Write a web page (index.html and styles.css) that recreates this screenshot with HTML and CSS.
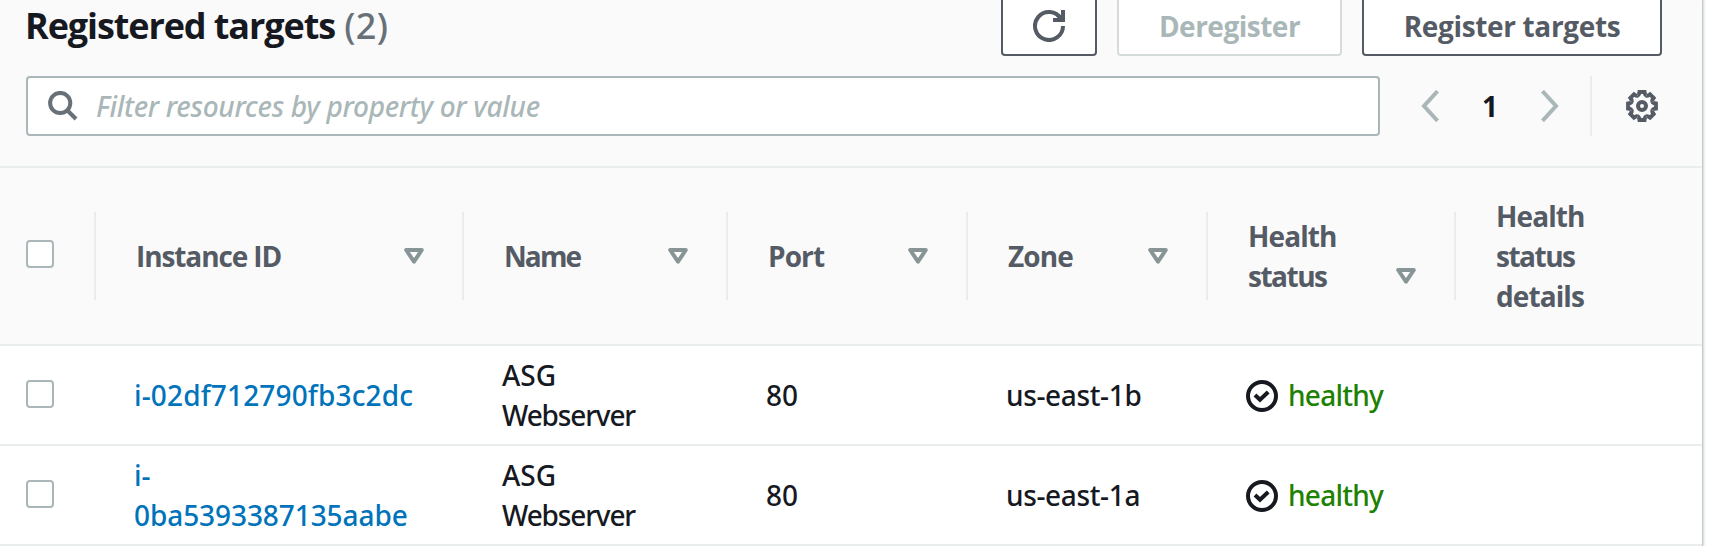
FILE: index.html
```html
<!DOCTYPE html>
<html lang="en">
<head>
<meta charset="utf-8">
<title>Registered targets</title>
<link rel="stylesheet" href="styles.css">
</head>
<body>
<svg class="defs" aria-hidden="true">
  <symbol id="sort" viewBox="0 0 20 16"><path d="M2.2 2h15.6L10 13.6z" fill="#fff" stroke="#879596" stroke-width="4" stroke-linejoin="round"/></symbol>
  <symbol id="check" viewBox="0 0 32 32"><g fill="none" stroke="#16191f" stroke-width="4"><circle cx="16" cy="16" r="14"/><path d="M9 15l5 4.8L22.2 12"/></g></symbol>
  <path id="tooth" d="M-4.32-10.44Q-2.9-11-2.5-13.9H2.5Q2.9-11 4.32-10.44"/>
</svg>
<main class="panel">
  <header class="head">
    <div class="title-row">
      <h1 class="title">Registered targets <span class="count">(2)</span></h1>
      <div class="actions">
        <button class="btn btn-icon" aria-label="Refresh">
          <svg width="32" height="32" viewBox="0 0 32 32" fill="none" stroke="#545b64" stroke-width="4"><path d="M30 16A14 14 0 1 1 28 8.8M20 10h10V0"/><path d="M24 5l5 5" stroke-width="3"/></svg>
        </button>
        <button class="btn btn-disabled" disabled>Deregister</button>
        <button class="btn btn-register">Register targets</button>
      </div>
    </div>
    <div class="tools">
      <div class="filter">
        <svg width="30" height="30" viewBox="0 0 30 30" fill="none" stroke="#687078" stroke-width="4"><circle cx="12.2" cy="12" r="10.1"/><path d="M19 19l9 9"/></svg>
        <span class="placeholder">Filter resources by property or value</span>
      </div>
      <nav class="pages">
        <svg width="18" height="32" viewBox="0 0 18 32" fill="none" stroke="#aab7b8" stroke-width="4"><path d="M16.5 1.2L3 16l13.5 14.8"/></svg>
        <span class="page">1</span>
        <svg width="18" height="32" viewBox="0 0 18 32" fill="none" stroke="#aab7b8" stroke-width="4"><path d="M1.5 1.2L15 16 1.5 30.8"/></svg>
      </nav>
      <div class="settings">
        <svg width="32" height="32" viewBox="-16 -16 32 32" fill="none" stroke="#545b64" stroke-width="4">
          <circle r="4"/>
          <use href="#tooth"/><use href="#tooth" transform="rotate(45)"/><use href="#tooth" transform="rotate(90)"/><use href="#tooth" transform="rotate(135)"/><use href="#tooth" transform="rotate(180)"/><use href="#tooth" transform="rotate(225)"/><use href="#tooth" transform="rotate(270)"/><use href="#tooth" transform="rotate(315)"/>
        </svg>
      </div>
    </div>
  </header>
  <section class="table">
    <div class="row row-head">
      <div class="cell-check"><span class="box"></span></div>
      <div class="th"><span class="label-id">Instance ID</span><svg class="sort"><use href="#sort"/></svg></div>
      <div class="th"><span class="label-name">Name</span><svg class="sort"><use href="#sort"/></svg></div>
      <div class="th"><span>Port</span><svg class="sort"><use href="#sort"/></svg></div>
      <div class="th"><span>Zone</span><svg class="sort"><use href="#sort"/></svg></div>
      <div class="th"><span>Health<br><span class="label-status">status</span></span><svg class="sort sort-low"><use href="#sort"/></svg></div>
      <div class="th"><span>Health<br><span class="label-status">status</span><br>details</span></div>
    </div>
    <div class="row row-body">
      <div class="cell-check"><span class="box"></span></div>
      <div class="td"><a class="link link-wide">i-02df712790fb3c2dc</a></div>
      <div class="td"><span>ASG<br><span class="server">Webserver</span></span></div>
      <div class="td">80</div>
      <div class="td zone">us-east-1b</div>
      <div class="td status"><svg class="ok"><use href="#check"/></svg><span class="healthy">healthy</span></div>
      <div class="td"></div>
    </div>
    <div class="row row-body">
      <div class="cell-check"><span class="box"></span></div>
      <div class="td"><a class="link">i-<br>0ba5393387135aabe</a></div>
      <div class="td"><span>ASG<br><span class="server">Webserver</span></span></div>
      <div class="td">80</div>
      <div class="td zone">us-east-1a</div>
      <div class="td status"><svg class="ok"><use href="#check"/></svg><span class="healthy">healthy</span></div>
      <div class="td"></div>
    </div>
  </section>
</main>
</body>
</html>
```
FILE: styles.css
```css
* { box-sizing: border-box; }
body {
  margin: 0;
  height: 546px;
  overflow: hidden;
  background: #fff;
  color: #16191f;
  font: 500 28px/40px "Noto Sans", "Open Sans", sans-serif;
}
svg { display: block; flex: none; }
.defs { position: absolute; width: 0; height: 0; }
.panel {
  width: 1702px;
  height: 546px;
  background: #fff;
  box-shadow: 1px 0 0 #c3cbcc, 2px 0 2px rgba(0, 28, 36, .2);
}

.head {
  height: 168px;
  background: #fafafa;
  border-bottom: 2px solid #eaeded;
}
.title-row {
  display: flex;
  justify-content: space-between;
  height: 76px;
  padding: 0 40px 0 25px;
}
.title {
  margin: 3px 0 0;
  font: 700 36px/46px "Open Sans", sans-serif;
  letter-spacing: -1.1px;
}
.count {
  color: #687078;
  font-family: "Noto Sans", sans-serif;
  font-weight: 500;
  letter-spacing: .4px;
  margin-left: 1px;
}
.actions { display: flex; gap: 20px; margin-top: -4px; height: 60px; }
.btn {
  display: flex;
  justify-content: center;
  align-items: center;
  padding: 0;
  border: 2px solid #545b64;
  border-radius: 4px;
  background: #fff;
  color: #545b64;
  font: 700 28px/40px "Open Sans", sans-serif;
  letter-spacing: -.35px;
}
.btn-icon { width: 96px; }
.btn-disabled { width: 225px; border-color: #d5dbdb; color: #aab7b8; letter-spacing: -.5px; }
.btn-register { width: 300px; }

.tools { display: flex; align-items: center; height: 60px; padding-left: 26px; }
.filter {
  display: flex;
  align-items: center;
  width: 1354px;
  height: 60px;
  padding-left: 20px;
  gap: 18px;
  border: 2px solid #aab7b8;
  border-radius: 4px;
  background: #fff;
}
.placeholder {
  color: #aab7b8;
  font-style: italic;
  letter-spacing: -.3px;
}
.pages { display: flex; align-items: center; margin-left: 41px; }
.page {
  width: 102px;
  text-align: center;
  font: 700 28px/40px "Open Sans", sans-serif;
}
.settings {
  margin-left: 31px;
  height: 60px;
  padding: 14px 0 0 34px;
  border-left: 2px solid #eaeded;
}

.row {
  display: grid;
  grid-template-columns: 94px 368px 264px 240px 240px 248px 248px;
  align-items: center;
  border-bottom: 2px solid #eaeded;
}
.row-head { height: 178px; background: #fafafa; }
.row-body { height: 100px; }
.cell-check { padding-left: 26px; }
.box {
  display: block;
  width: 28px;
  height: 28px;
  margin-bottom: 4px;
  border: 2px solid #aab7b8;
  border-radius: 4px;
  background: #fff;
}
.row-body .box { margin-bottom: 2px; }
.th {
  display: flex;
  align-items: center;
  justify-content: space-between;
  height: 88px;
  padding: 0 38px 0 40px;
  border-left: 2px solid #eaeded;
  color: #545b64;
  font: 700 28px/40px "Open Sans", sans-serif;
  letter-spacing: -.9px;
}
.label-id { letter-spacing: -1.1px; }
.label-name { letter-spacing: -1.9px; }
.label-status { letter-spacing: -1.5px; }
.sort { width: 20px; height: 16px; }
.sort-low { margin-top: 40px; }
.td { padding-left: 40px; }
.link { color: #0073bb; letter-spacing: -.08px; }
.link-wide { letter-spacing: .15px; }
.server { letter-spacing: -1.15px; }
.zone { letter-spacing: -.35px; }
.status { display: flex; align-items: center; gap: 10px; }
.ok { width: 32px; height: 32px; margin-top: 2px; }
.healthy { color: #1d8102; letter-spacing: -.75px; }
```
